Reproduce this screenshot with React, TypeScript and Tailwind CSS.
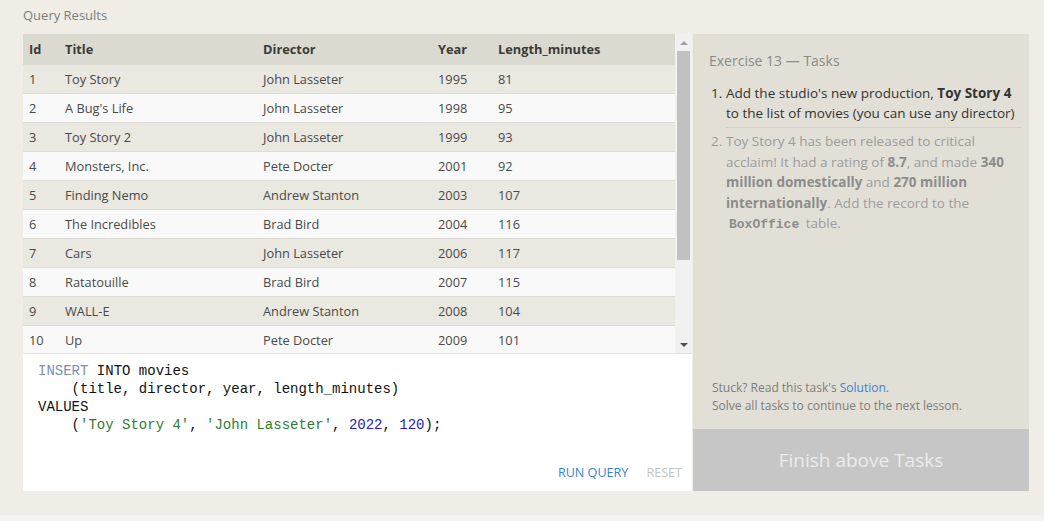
import React from 'react';

const MOVIES = [
  { id: 1, title: 'Toy Story', director: 'John Lasseter', year: 1995, length: 81 },
  { id: 2, title: "A Bug's Life", director: 'John Lasseter', year: 1998, length: 95 },
  { id: 3, title: 'Toy Story 2', director: 'John Lasseter', year: 1999, length: 93 },
  { id: 4, title: 'Monsters, Inc.', director: 'Pete Docter', year: 2001, length: 92 },
  { id: 5, title: 'Finding Nemo', director: 'Andrew Stanton', year: 2003, length: 107 },
  { id: 6, title: 'The Incredibles', director: 'Brad Bird', year: 2004, length: 116 },
  { id: 7, title: 'Cars', director: 'John Lasseter', year: 2006, length: 117 },
  { id: 8, title: 'Ratatouille', director: 'Brad Bird', year: 2007, length: 115 },
  { id: 9, title: 'WALL-E', director: 'Andrew Stanton', year: 2008, length: 104 },
  { id: 10, title: 'Up', director: 'Pete Docter', year: 2009, length: 101 },
];

const COLS = 'grid grid-cols-[36px_198px_175px_60px_1fr] pl-[6px] items-center';

const App: React.FC = () => {
  return (
    <div
      className="h-[521px] flex flex-col bg-[#efede6] text-[#4a4a4a]"
      style={{ fontFamily: '"Open Sans", "Liberation Sans", sans-serif' }}
    >
      <div className="flex-1 pl-[23px] pt-[6px]">
        <div className="h-[28px] text-[13px] leading-[18px] text-[#7d7d7d]">Query Results</div>

        <div className="flex w-[1006px] h-[457px]">
          {/* Left: results + editor */}
          <div className="w-[669px] flex flex-col bg-white">
            <div className="h-[319px] flex overflow-hidden">
              <div className="flex-1 text-[12.8px]">
                <div className={`${COLS} h-[31px] bg-[#dbdad0] font-bold text-[#3a3a3a]`}>
                  <span>Id</span>
                  <span>Title</span>
                  <span>Director</span>
                  <span>Year</span>
                  <span>Length_minutes</span>
                </div>
                {MOVIES.map((m, i) => (
                  <div
                    key={m.id}
                    className={`${COLS} h-[29px] pt-[1px] border-b border-[#dedcd4] ${
                      i % 2 === 0 ? 'bg-[#e9e8e1]' : 'bg-[#f9f9f9]'
                    }`}
                  >
                    <span>{m.id}</span>
                    <span>{m.title}</span>
                    <span>{m.director}</span>
                    <span>{m.year}</span>
                    <span>{m.length}</span>
                  </div>
                ))}
              </div>

              {/* scrollbar */}
              <div className="w-[17px] bg-[#f1f1f1] flex flex-col items-center">
                <div className="h-[17px] flex items-center justify-center">
                  <div className="w-0 h-0 border-l-[4px] border-r-[4px] border-b-[4px] border-l-transparent border-r-transparent border-b-[#a3a3a3]" />
                </div>
                <div className="w-[13px] h-[209px] bg-[#c1c1c1]" />
                <div className="flex-1" />
                <div className="h-[17px] flex items-center justify-center">
                  <div className="w-0 h-0 border-l-[4px] border-r-[4px] border-t-[4px] border-l-transparent border-r-transparent border-t-[#505050]" />
                </div>
              </div>
            </div>

            {/* editor */}
            <div className="flex-1 flex flex-col border-t border-[#e4e4e4]">
              <pre
                className="flex-1 pl-[15px] pt-[8px] text-[14px] leading-[18px] text-[#111]"
                style={{ fontFamily: '"Liberation Mono", "DejaVu Sans Mono", monospace' }}
              >
                <span className="text-[#7c8fb2]">INSERT</span> INTO movies{'\n'}
                {'    '}(title, director, year, length_minutes){'\n'}
                VALUES{'\n'}
                {'    '}(<span className="text-[#2e7d32]">'Toy Story 4'</span>,{' '}
                <span className="text-[#2e7d32]">'John Lasseter'</span>,{' '}
                <span className="text-[#2020c8]">2022</span>,{' '}
                <span className="text-[#2020c8]">120</span>);
              </pre>
              <div className="flex justify-end gap-[18px] pr-[10px] pb-[9px] text-[12.6px] leading-[18px]">
                <span className="text-[#3b7fd9]">RUN QUERY</span>
                <span className="text-[#c4c4c4]">RESET</span>
              </div>
            </div>
          </div>

          {/* Right: tasks panel */}
          <div className="ml-[1px] w-[336px] flex flex-col bg-[#e2e0d6]">
            <div className="flex-1 flex flex-col pt-[17px]">
              <div className="pl-[16px] text-[14px] leading-[20px] text-[#8a8a8a]">
                Exercise 13 — Tasks
              </div>
              <div className="mt-[12px] pl-[18px] pr-[7px] text-[13.5px] leading-[20px]">
                <div className="flex pb-[3px]">
                  <span className="w-[15px] text-[#333]">1.</span>
                  <div className="flex-1 text-[#333] border-b border-[#d2d0c6] pb-[4px]">
                    Add the studio's new production, <b>Toy Story 4</b> to the list of movies
                    (you can use any director)
                  </div>
                </div>
                <div className="flex text-[#9c9c9c] leading-[20.5px]">
                  <span className="w-[15px]">2.</span>
                  <div className="flex-1">
                    Toy Story 4 has been released to critical acclaim! It had a rating of{' '}
                    <b className="text-[#8c8c8c]">8.7</b>, and made{' '}
                    <b className="text-[#8c8c8c]">340 million domestically</b> and{' '}
                    <b className="text-[#8c8c8c]">270 million internationally</b>. Add the record
                    to the{' '}
                    <code
                      className="px-[3px] font-bold text-[#8c8c8c] text-[13px]"
                      style={{ fontFamily: '"Liberation Mono", "DejaVu Sans Mono", monospace' }}
                    >
                      BoxOffice
                    </code>{' '}
                    table.
                  </div>
                </div>
              </div>
              <div className="flex-1" />
              <div className="pl-[19px] pb-[14px] text-[12px] leading-[18px] text-[#7d7d7d]">
                <div>
                  Stuck? Read this task's <span className="text-[#3b7fd9]">Solution</span>.
                </div>
                <div>Solve all tasks to continue to the next lesson.</div>
              </div>
            </div>
            <div className="h-[62px] bg-[#c6c6c6] flex items-center justify-center text-[19px] text-[#ececec]">
              Finish above Tasks
            </div>
          </div>
        </div>
      </div>
      <div className="h-[6px] bg-[#f5f4f0]" />
    </div>
  );
};

export default App;
